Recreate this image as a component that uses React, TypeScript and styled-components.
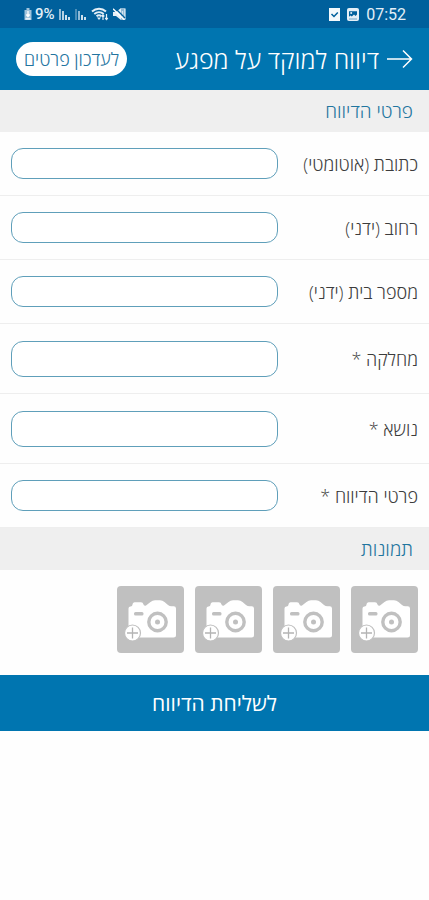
import React from 'react';
import styled, { createGlobalStyle } from 'styled-components';

const GlobalStyle = createGlobalStyle`
  *, *::before, *::after { box-sizing: border-box; }
  body {
    margin: 0;
    background: #fefefe;
    color: #3c3c3c;
    font-family: 'Open Sans', 'Noto Sans', sans-serif;
    font-weight: 300;
  }
  button, input, select { font: inherit; color: inherit; margin: 0; }
`;

const Page = styled.div`
  direction: rtl;
  display: flex;
  flex-direction: column;
  min-height: 100vh;
`;

const StatusBar = styled.div`
  direction: ltr;
  display: flex;
  align-items: center;
  justify-content: space-between;
  height: 28px;
  padding: 0 23px;
  background: #00609c;
  color: #e4eff7;
  font-family: Roboto, sans-serif;
  font-weight: 400;
`;

const StatusGroup = styled.div<{ $gap: number }>`
  display: flex;
  align-items: center;
  gap: ${({ $gap }) => $gap}px;
`;

const Battery = styled.span`
  display: flex;
  align-items: center;
  gap: 2px;
  font-size: 15px;
  font-weight: 500;
`;

const Clock = styled.time`
  font-size: 16px;
`;

const Header = styled.header`
  display: flex;
  align-items: center;
  height: 62px;
  padding: 0 16px;
  background: #0075b0;
  color: #fff;
`;

const BackButton = styled.button`
  display: flex;
  padding: 0;
  border: 0;
  background: none;
`;

const Title = styled.h1`
  margin: 0 8px 0 auto;
  flex: 1;
  font-size: 25px;
  line-height: 32px;
  font-weight: 300;
  white-space: nowrap;
`;

const UpdateButton = styled.button`
  height: 34px;
  padding: 0 8px;
  border: 0;
  border-radius: 17px;
  background: #fff;
  color: #23749f;
  font-size: 18px;
  line-height: 24px;
  white-space: nowrap;
`;

const SectionTitle = styled.h2`
  display: flex;
  align-items: center;
  height: 42px;
  margin: 0;
  padding: 0 16px;
  background: #efefef;
  color: #1f769f;
  font-size: 19px;
  line-height: 24px;
  font-weight: 300;
`;

const Row = styled.div<{ $tall?: boolean }>`
  display: grid;
  grid-template-columns: 1fr 2fr;
  column-gap: 6px;
  align-items: center;
  height: ${({ $tall }) => ($tall ? 70 : 64)}px;
  padding: 0 11px;
  border-bottom: 1px solid #eeeeee;
`;

const Label = styled.label`
  font-size: 18px;
  line-height: 24px;
  white-space: nowrap;
`;

const TextField = styled.input`
  width: 100%;
  height: 31px;
  padding: 0 10px;
  border: 1px solid #5f9fba;
  border-radius: 12px;
  background: #fff;
  outline: none;
`;

const SelectField = styled.select`
  appearance: none;
  width: 100%;
  height: 36px;
  padding: 0 10px;
  border: 1px solid #5f9fba;
  border-radius: 12px;
  background: #fff;
  outline: none;
`;

const Photos = styled.div`
  display: flex;
  flex-wrap: wrap;
  gap: 11px;
  padding: 16px 11px 22px;
`;

const PhotoButton = styled.button`
  display: flex;
  width: 67px;
  height: 67px;
  padding: 0;
  border: 0;
  border-radius: 4px;
  background: #c0c0c0;
`;

const SubmitButton = styled.button`
  height: 56px;
  padding: 0;
  border: 0;
  background: #0075b0;
  color: #fff;
  font-size: 21px;
  line-height: 30px;
  font-weight: 400;
`;

const ChargeIcon = () => (
  <svg width="10" height="13" viewBox="0 0 9 13" aria-hidden="true">
    <path d="M3 0h3v2h2v10H1V2h2z" fill="#9fc3dc" />
    <path d="M4.5 3v5M2.8 6.5l1.7 2 1.7-2M2 10.800h5" stroke="#fff" strokeWidth="1.300" fill="none" />
  </svg>
);

const SignalIcon = ({ faint }: { faint?: boolean }) => (
  <svg width="12" height="12" viewBox="0 0 12 12" fill="none" stroke="#e4eff7" aria-hidden="true">
    <path d="M1 1v11" strokeWidth="1.300" opacity={faint ? 0.5 : 1} />
    <path d="M4 3v9" strokeWidth="1.600" opacity={faint ? 0.8 : 1} />
    <path d="M7 7v5M10 9v3" strokeWidth="1.800" />
  </svg>
);

const WifiIcon = () => (
  <svg width="18" height="14" viewBox="0 0 18 14" fill="none" stroke="#e4eff7" aria-hidden="true">
    <path d="M1 4.500C5 .8 11 .8 15 4.500M3.300 7c2.800-2.400 6.600-2.400 9.400 0M5.500 9.300c1.600-1.300 3.400-1.300 5 0" strokeWidth="1.900" />
    <path d="M8 13l-2-2.500h4z" fill="#e4eff7" stroke="none" />
    <path d="M12 13V8m-1.300 1.500L12 8l1.300 1.500M15.500 7v5.500m-1.300-1.500l1.300 1.500 1.300-1.500" strokeWidth="1.200" />
  </svg>
);

const MuteIcon = () => (
  <svg width="13" height="12" viewBox="0 0 13 12" aria-hidden="true">
    <path d="M0 4h3l5-4v12L3 8H0z" fill="#e4eff7" />
    <path d="M8 0h4.500v12H8z" fill="#8db7d3" />
    <path d="M9.500 3v6M11.800 1v10" stroke="#d3e4f0" strokeWidth="1.300" />
    <path d="M2 0l10 10" stroke="#00609c" strokeWidth="1.300" />
    <path d="M0 .8L11.500 12" stroke="#fff" strokeWidth="1.400" />
  </svg>
);

const TaskIcon = () => (
  <svg width="11" height="13" viewBox="0 0 11 13" aria-hidden="true">
    <path d="M0 0h11v13H0z" fill="#f4f9fc" />
    <path d="M2.500 6l2.500 2.500L8.800 4.500" fill="none" stroke="#00609c" strokeWidth="1.500" />
  </svg>
);

const PictureIcon = () => (
  <svg width="12" height="13" viewBox="0 0 12 13" aria-hidden="true">
    <rect width="12" height="13" rx="2" fill="#e4eff7" />
    <path d="M2 3.200h8v3.300L8.500 8 7 6.500 4.800 8.500 3.500 7.500 2 8.800z" fill="#00609c" />
    <circle cx="4.200" cy="5" r="1" fill="#e4eff7" />
    <path d="M2 11h8" stroke="#00609c" strokeWidth="1" opacity=".5" />
  </svg>
);

const ArrowIcon = () => (
  <svg width="26" height="20" viewBox="0 0 26 20" fill="none" stroke="#fff" strokeWidth="1.500" aria-hidden="true">
    <path d="M0 10h24.500M16 1.500L24.500 10 16 18.500" />
  </svg>
);

const CameraIcon = () => (
  <svg width="67" height="67" viewBox="0 0 67 67" aria-hidden="true">
    <path
      d="M13.500 20.500q2 0 2-2t2-2.300h6.500q2 0 2.400 2t2.600 1.300l4.500-3.500q2-1.700 4.500-1.700h5q2.500 0 4.500 1.700l3.500 3q1.500 1.300 3.500 1.300h2.200q2.300 0 2.300 2.300v26.400q0 2.500-2.500 2.500H14q-2.500 0-2.500-2.500V22.500q0-2 2-2z"
      fill="#fff"
    />
    <rect x="17" y="26" width="9.500" height="3.600" rx="1.500" fill="#c0c0c0" />
    <circle cx="40.500" cy="36" r="8.700" fill="#fff" stroke="#c0c0c0" strokeWidth="3.400" />
    <circle cx="40.500" cy="36" r="2.500" fill="#c0c0c0" />
    <circle cx="15.500" cy="47" r="8" fill="#fff" stroke="#c0c0c0" strokeWidth="1.200" />
    <path d="M10 47h11M15.500 41.500v11" stroke="#b4b4b4" strokeWidth="1.300" />
  </svg>
);

type Field = { id: string; label: string; select?: boolean };

const fields: Field[] = [
  { id: 'address', label: 'כתובת (אוטומטי)' },
  { id: 'street', label: 'רחוב (ידני)' },
  { id: 'house', label: 'מספר בית (ידני)' },
  { id: 'department', label: 'מחלקה *', select: true },
  { id: 'subject', label: 'נושא *', select: true },
  { id: 'details', label: 'פרטי הדיווח *' },
];

export default function App() {
  return (
    <>
      <GlobalStyle />
      <Page lang="he">
        <StatusBar>
          <StatusGroup $gap={4}>
            <Battery>
              <ChargeIcon />
              9%
            </Battery>
            <SignalIcon />
            <SignalIcon faint />
            <WifiIcon />
            <MuteIcon />
          </StatusGroup>
          <StatusGroup $gap={7}>
            <TaskIcon />
            <PictureIcon />
            <Clock>07:52</Clock>
          </StatusGroup>
        </StatusBar>
        <Header>
          <BackButton type="button" aria-label="חזרה">
            <ArrowIcon />
          </BackButton>
          <Title>דיווח למוקד על מפגע</Title>
          <UpdateButton type="button">לעדכון פרטים</UpdateButton>
        </Header>
        <SectionTitle>פרטי הדיווח</SectionTitle>
        {fields.map(({ id, label, select }) => (
          <Row key={id} $tall={select}>
            <Label htmlFor={id}>{label}</Label>
            {select ? <SelectField id={id} /> : <TextField id={id} type="text" />}
          </Row>
        ))}
        <SectionTitle>תמונות</SectionTitle>
        <Photos>
          {[1, 2, 3, 4].map((n) => (
            <PhotoButton key={n} type="button" aria-label={`הוספת תמונה ${n}`}>
              <CameraIcon />
            </PhotoButton>
          ))}
        </Photos>
        <SubmitButton type="button">לשליחת הדיווח</SubmitButton>
      </Page>
    </>
  );
}
